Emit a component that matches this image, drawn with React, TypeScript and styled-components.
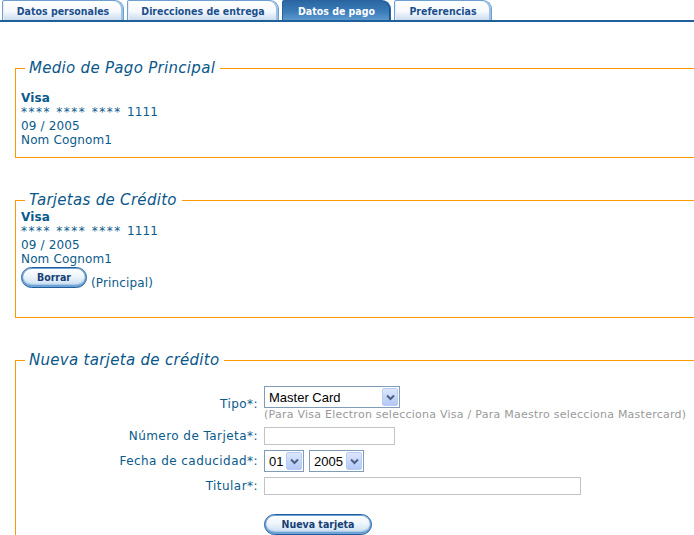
import styled, { createGlobalStyle } from "styled-components";

const GlobalStyle = createGlobalStyle`
  html, body {
    margin: 0;
    padding: 0;
    background: #fff;
    overflow: hidden;
  }
  body {
    font-family: "DejaVu Sans", Verdana, sans-serif;
    font-size: 12px;
    color: #0a5a8c;
  }
`;

const TabBar = styled.div`
  display: flex;
  align-items: flex-end;
  gap: 3px;
  padding-left: 2px;
  height: 20px;
  border-bottom: 2px solid #1f5f9a;
`;

const Tab = styled.div<{ $width: number; $active?: boolean }>`
  box-sizing: border-box;
  width: ${(p) => p.$width}px;
  height: 20px;
  display: flex;
  align-items: center;
  justify-content: center;
  border: 1px solid ${(p) => (p.$active ? "#2a64a0" : "#6d9fd0")};
  border-bottom: none;
  border-top-left-radius: 2px;
  border-top-right-radius: 9px;
  background: ${(p) =>
    p.$active
      ? "linear-gradient(#2a67a2 0%, #3a7bb8 55%, #5b98cf 100%)"
      : "linear-gradient(#ffffff 0%, #f6f9fd 55%, #cadcf0 100%)"};
  box-shadow: ${(p) =>
    p.$active ? "inset -1px 0 0 #1d5088" : "inset -2px 0 0 #9dbfe3, inset 1px 0 0 #e3eef8"};
  font-family: "DejaVu Sans Condensed", "DejaVu Sans", sans-serif;
  font-stretch: condensed;
  font-weight: bold;
  font-size: 10.5px;
  color: ${(p) => (p.$active ? "#ffffff" : "#1b4f8c")};
  white-space: nowrap;
`;

const Content = styled.div`
  padding-left: 15px;
  padding-top: 36px;
`;

const Box = styled.fieldset<{ $padBottom: number }>`
  width: 720px;
  margin: 0 0 32px 0;
  padding: 0 5px ${(p) => p.$padBottom}px 5px;
  border: 1px solid #f90;
  min-inline-size: 0;
`;

const Legend = styled.legend`
  margin-left: 4px;
  padding: 0 5px 0 4px;
  font-style: italic;
  font-size: 15px;
  line-height: 20px;
  letter-spacing: 0.3px;
  color: #0a578a;
`;

const Card = styled.div<{ $gapTop?: boolean }>`
  margin-top: ${(p) => (p.$gapTop ? "13px" : "0")};
  line-height: 14px;
  letter-spacing: 0.15px;
`;

const CardName = styled.div`
  font-weight: bold;
`;

const Line = styled.div``;

const Stars = styled.span`
  letter-spacing: 1.5px;
`;

const ActionLine = styled.div`
  display: flex;
  align-items: flex-end;
  gap: 4px;
  margin-top: 1px;
`;

const PillButton = styled.button<{ $width: number }>`
  box-sizing: border-box;
  width: ${(p) => p.$width}px;
  height: 21px;
  padding: 0 0 2px 0;
  border: 1px solid #1f5e9e;
  border-radius: 11px;
  background: linear-gradient(#ffffff 0%, #eef5fc 45%, #c3daf1 100%);
  box-shadow: inset 0 0 0 1px #6fa3d6, inset 0 -2px 2px #4f8cc8;
  font-family: "DejaVu Sans Condensed", "DejaVu Sans", sans-serif;
  font-stretch: condensed;
  font-weight: bold;
  font-size: 10.5px;
  color: #163f73;
  cursor: pointer;
`;

const Note = styled.span`
  line-height: 14px;
  margin-bottom: -2px;
`;

const Form = styled.div`
  margin-top: 16px;
  display: grid;
  grid-template-columns: 237px auto;
  column-gap: 6px;
  row-gap: 5px;
  align-items: center;
`;

const Label = styled.div`
  text-align: right;
  letter-spacing: 0.45px;
  line-height: 14px;
`;

const Field = styled.div`
  display: flex;
  flex-direction: column;
  align-items: flex-start;
`;

const FieldRow = styled.div`
  display: flex;
  gap: 5px;
`;

const Hint = styled.div`
  font-size: 11px;
  letter-spacing: 0.25px;
  line-height: 14px;
  color: #9a9a9a;
  white-space: nowrap;
`;

const SelectBox = styled.div<{ $width: number }>`
  box-sizing: border-box;
  width: ${(p) => p.$width}px;
  height: 22px;
  display: flex;
  align-items: center;
  justify-content: space-between;
  padding: 1px 1px 1px 4px;
  border: 1px solid #7f9db9;
  background: #fff;
  font-family: "Liberation Sans", Arial, sans-serif;
  font-size: 13px;
  color: #000;
`;

const SelectArrow = styled.span`
  box-sizing: border-box;
  width: 16px;
  height: 18px;
  display: flex;
  align-items: center;
  justify-content: center;
  border: 1px solid #b9cbf5;
  border-radius: 2px;
  background: linear-gradient(#dce7fe, #b3c8f5);
`;

const TextInput = styled.div<{ $width: number }>`
  box-sizing: border-box;
  width: ${(p) => p.$width}px;
  height: 18px;
  border: 1px solid #c3c3c3;
  background: #fff;
`;

const SubmitRow = styled.div`
  grid-column: 2;
  margin-top: 14px;
`;

function Select({ width, value }: { width: number; value: string }) {
  return (
    <SelectBox $width={width}>
      <span>{value}</span>
      <SelectArrow>
        <svg width="9" height="7" viewBox="0 0 9 7">
          <path d="M1 1.5 L4.5 5 L8 1.5" fill="none" stroke="#4d6185" strokeWidth="2" />
        </svg>
      </SelectArrow>
    </SelectBox>
  );
}

type CardProps = { gapTop?: boolean; children?: React.ReactNode };

function CardInfo({ gapTop, children }: CardProps) {
  return (
    <Card $gapTop={gapTop}>
      <CardName>Visa</CardName>
      <Line>
        <Stars>**** **** **** </Stars>1111
      </Line>
      <Line>09 / 2005</Line>
      <Line>Nom Cognom1</Line>
      {children}
    </Card>
  );
}

export default function App() {
  return (
    <>
      <GlobalStyle />
      <TabBar>
        <Tab $width={122}>Datos personales</Tab>
        <Tab $width={152}>Direcciones de entrega</Tab>
        <Tab $width={109} $active>Datos de pago</Tab>
        <Tab $width={98}>Preferencias</Tab>
      </TabBar>

      <Content>
        <Box $padBottom={10}>
          <Legend>Medio de Pago Principal</Legend>
          <CardInfo gapTop />
        </Box>

        <Box $padBottom={29}>
          <Legend>Tarjetas de Crédito</Legend>
          <CardInfo>
            <ActionLine>
              <PillButton $width={66}>Borrar</PillButton>
              <Note>(Principal)</Note>
            </ActionLine>
          </CardInfo>
        </Box>

        <Box $padBottom={60}>
          <Legend>Nueva tarjeta de crédito</Legend>
          <Form>
            <Label>Tipo*:</Label>
            <Field>
              <Select width={136} value="Master Card" />
              <Hint>(Para Visa Electron selecciona Visa / Para Maestro selecciona Mastercard)</Hint>
            </Field>

            <Label>Número de Tarjeta*:</Label>
            <Field>
              <TextInput $width={131} />
            </Field>

            <Label>Fecha de caducidad*:</Label>
            <FieldRow>
              <Select width={40} value="01" />
              <Select width={55} value="2005" />
            </FieldRow>

            <Label>Titular*:</Label>
            <Field>
              <TextInput $width={317} />
            </Field>

            <SubmitRow>
              <PillButton $width={108}>Nueva tarjeta</PillButton>
            </SubmitRow>
          </Form>
        </Box>
      </Content>
    </>
  );
}
